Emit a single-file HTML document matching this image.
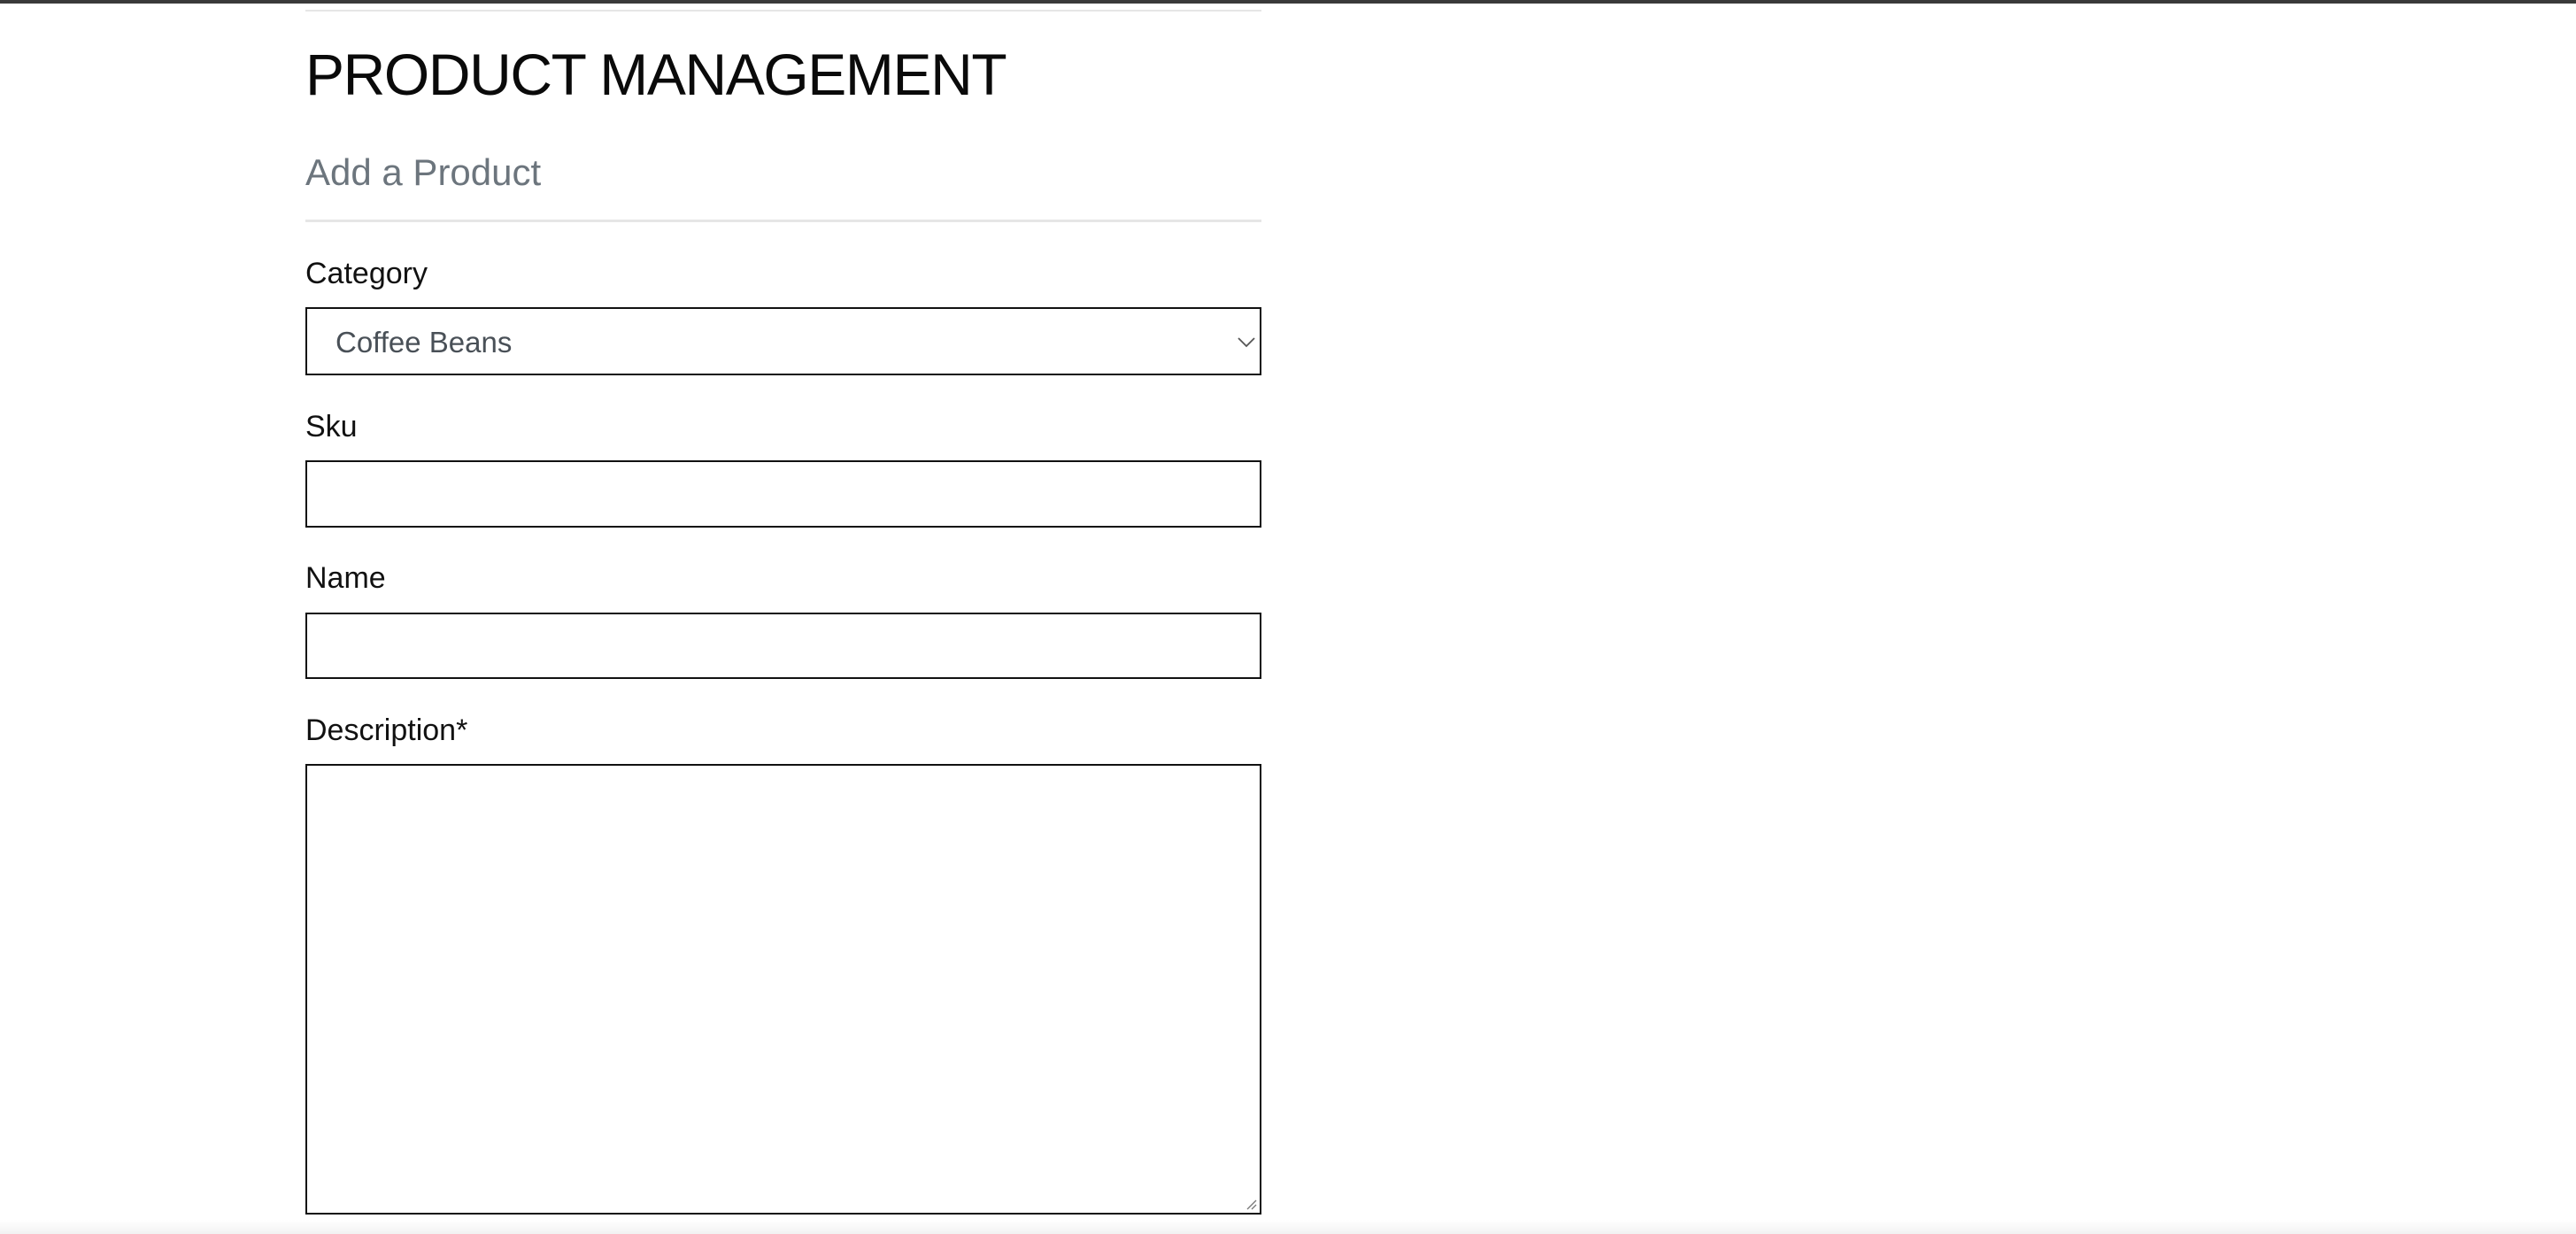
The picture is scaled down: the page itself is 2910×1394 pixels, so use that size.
<!DOCTYPE html>
<html><head><meta charset="utf-8"><style>
html,body{margin:0;padding:0;width:2910px;height:1394px;background:#fff;overflow:hidden;font-family:"Liberation Sans",sans-serif;}
.a{position:absolute;}
.lbl{position:absolute;left:345px;font-size:34px;color:#111;line-height:1;}
.box{position:absolute;left:345px;width:1076px;border:2px solid #111;background:#fff;}
</style></head><body>
<div class="a" style="left:0;top:0;width:2910px;height:4px;background:#3a3a3a"></div>
<div class="a" style="left:345px;top:11px;width:1080px;height:2px;background:#e6e6e6"></div>
<div class="a" style="left:345px;top:51px;font-size:66px;line-height:1;color:#0a0a0a;letter-spacing:-1.4px;white-space:nowrap">PRODUCT MANAGEMENT</div>
<div class="a" style="left:345px;top:174px;font-size:42px;line-height:1;color:#6c757d;white-space:nowrap">Add a Product</div>
<div class="a" style="left:345px;top:248px;width:1080px;height:3px;background:#e6e6e6"></div>

<div class="lbl" style="top:292px">Category</div>
<div class="box" style="top:347px;height:73px"></div>
<div class="a" style="left:379px;top:370px;font-size:33px;line-height:1;color:#495057">Coffee Beans</div>
<svg class="a" style="left:1398px;top:380px" width="20" height="13" viewBox="0 0 20 13"><path d="M1 2 L10 11 L19 2" fill="none" stroke="#555" stroke-width="1.8"/></svg>

<div class="lbl" style="top:465px">Sku</div>
<div class="box" style="top:520px;height:72px"></div>

<div class="lbl" style="top:636px">Name</div>
<div class="box" style="top:692px;height:71px"></div>

<div class="lbl" style="top:808px">Description*</div>
<div class="box" style="top:863px;height:505px"></div>
<svg class="a" style="left:1405px;top:1352px" width="16" height="16"><path d="M14 4 L4 14 M14 9 L9 14" stroke="#777" stroke-width="1.3"/></svg>

<div class="a" style="left:0;top:1378px;width:2910px;height:16px;background:linear-gradient(#fff,#f2f2f2)"></div>
</body></html>
